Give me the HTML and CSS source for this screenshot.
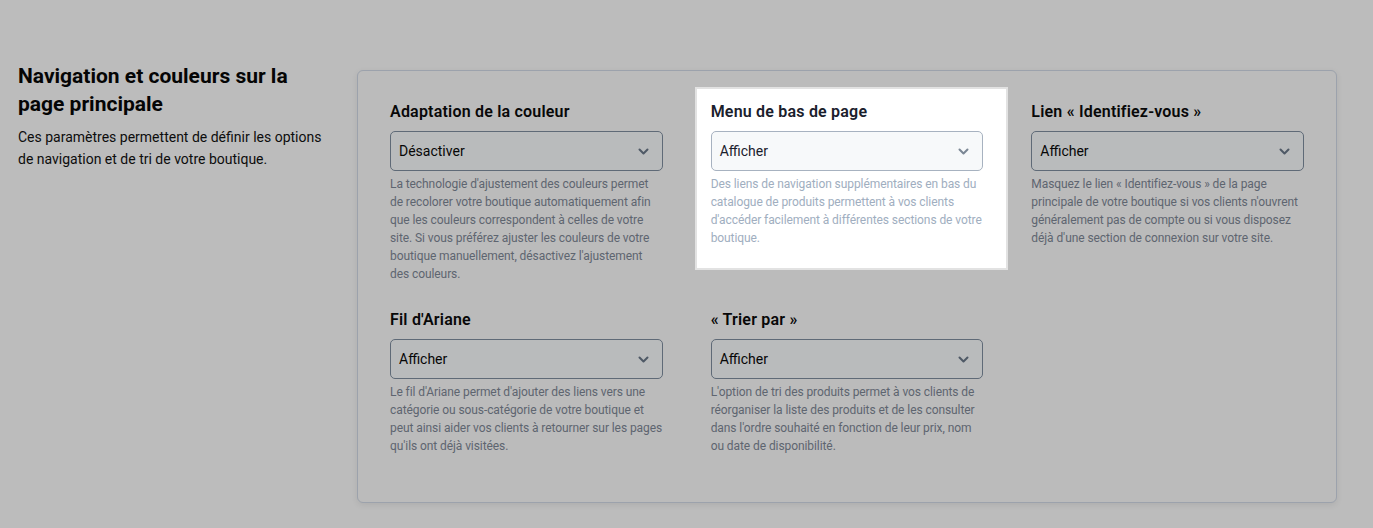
FILE: index.html
```html
<!DOCTYPE html>
<html lang="fr">
<head>
<meta charset="utf-8">
<title>Navigation et couleurs</title>
<link rel="stylesheet" href="styles.css">
</head>
<body>
<div class="page">
  <aside class="intro">
    <h2 class="intro-title">Navigation et couleurs sur la page principale</h2>
    <p class="intro-text">Ces paramètres permettent de définir les options de navigation et de tri de votre boutique.</p>
  </aside>
  <section class="card">
    <div class="grid">
      <div class="field">
        <div class="field-label">Adaptation de la couleur</div>
        <div class="select"><span>Désactiver</span><svg class="chev" width="11" height="7" viewBox="0 0 11 7"><path d="M1.5 1.5l4 4 4-4" fill="none" stroke="currentColor" stroke-width="2" stroke-linecap="round" stroke-linejoin="round"/></svg></div>
        <p class="field-help">La technologie d'ajustement des couleurs permet de recolorer votre boutique automatiquement afin que les couleurs correspondent à celles de votre site. Si vous préférez ajuster les couleurs de votre boutique manuellement, désactivez l'ajustement des couleurs.</p>
      </div>
      <div class="field field-spotlit">
        <div class="field-label">Menu de bas de page</div>
        <div class="select"><span>Afficher</span><svg class="chev" width="11" height="7" viewBox="0 0 11 7"><path d="M1.5 1.5l4 4 4-4" fill="none" stroke="currentColor" stroke-width="2" stroke-linecap="round" stroke-linejoin="round"/></svg></div>
        <p class="field-help">Des liens de navigation supplémentaires en bas du catalogue de produits permettent à vos clients d'accéder facilement à différentes sections de votre boutique.</p>
      </div>
      <div class="field">
        <div class="field-label">Lien « Identifiez-vous »</div>
        <div class="select"><span>Afficher</span><svg class="chev" width="11" height="7" viewBox="0 0 11 7"><path d="M1.5 1.5l4 4 4-4" fill="none" stroke="currentColor" stroke-width="2" stroke-linecap="round" stroke-linejoin="round"/></svg></div>
        <p class="field-help">Masquez le lien « Identifiez-vous » de la page principale de votre boutique si vos clients n'ouvrent généralement pas de compte ou si vous disposez déjà d'une section de connexion sur votre site.</p>
      </div>
      <div class="field">
        <div class="field-label">Fil d'Ariane</div>
        <div class="select"><span>Afficher</span><svg class="chev" width="11" height="7" viewBox="0 0 11 7"><path d="M1.5 1.5l4 4 4-4" fill="none" stroke="currentColor" stroke-width="2" stroke-linecap="round" stroke-linejoin="round"/></svg></div>
        <p class="field-help">Le fil d'Ariane permet d'ajouter des liens vers une catégorie ou sous-catégorie de votre boutique et peut ainsi aider vos clients à retourner sur les pages qu'ils ont déjà visitées.</p>
      </div>
      <div class="field">
        <div class="field-label">« Trier par »</div>
        <div class="select"><span>Afficher</span><svg class="chev" width="11" height="7" viewBox="0 0 11 7"><path d="M1.5 1.5l4 4 4-4" fill="none" stroke="currentColor" stroke-width="2" stroke-linecap="round" stroke-linejoin="round"/></svg></div>
        <p class="field-help">L'option de tri des produits permet à vos clients de réorganiser la liste des produits et de les consulter dans l'ordre souhaité en fonction de leur prix, nom ou date de disponibilité.</p>
      </div>
    </div>
  </section>
</div>
</body>
</html>
```

FILE: styles.css
```css
* { box-sizing: border-box; }
html, body { margin: 0; padding: 0; }
body {
  background: #bcbcbc;
  font-family: Roboto, "Noto Sans", "Liberation Sans", sans-serif;
  color: #0b0b0b;
  height: 528px;
  overflow: hidden;
}
.page {
  display: flex;
  align-items: flex-start;
  padding: 62px 0 0 18px;
}
.intro {
  flex: 0 0 304px;
  margin-right: 35px;
}
.intro-title {
  margin: 0;
  font-size: 21px;
  line-height: 28px;
  font-weight: 700;
  color: #050505;
}
.intro-text {
  margin: 8px 0 0;
  font-size: 14px;
  line-height: 22px;
  color: #0d0d0d;
}
.card {
  flex: 0 0 980px;
  margin-top: 8px;
  background: #bbbbbb;
  border: 1px solid #9ca2ac;
  border-radius: 6px;
  box-shadow: 0 2px 6px rgba(0, 0, 0, 0.08);
  padding: 32px 32px 47px;
}
.grid {
  display: grid;
  grid-template-columns: repeat(3, 1fr);
  column-gap: 48px;
  row-gap: 28px;
  align-items: start;
}
.field-label {
  font-size: 16px;
  line-height: 18px;
  font-weight: 600;
  letter-spacing: 0.2px;
  color: #080808;
  margin-bottom: 10px;
}
.select {
  height: 40px;
  display: flex;
  align-items: center;
  justify-content: space-between;
  padding: 0 13px 0 8px;
  border: 1px solid #5f6a77;
  border-radius: 5px;
  background: #b9bbbc;
  font-size: 14px;
  color: #070707;
}
.chev { color: #4f5966; display: block; }
.field-help {
  margin: 4px 0 0;
  font-size: 12px;
  line-height: 18px;
  letter-spacing: -0.08px;
  color: #5e6570;
}
.field-spotlit {
  position: relative;
  z-index: 1;
  background: #ffffff;
  margin: -14px -23px -21px -14px;
  padding: 14px 23px 21px 14px;
  box-shadow: 0 0 0 2px #e2e2e2;
}
.field-spotlit .field-label { color: #1a202c; }
.field-spotlit .select {
  border-color: #a7b2c0;
  background: #f7f9fa;
  color: #1a202c;
}
.field-spotlit .chev { color: #7b8794; }
.field-spotlit .field-help { color: #a0aec0; }
```
